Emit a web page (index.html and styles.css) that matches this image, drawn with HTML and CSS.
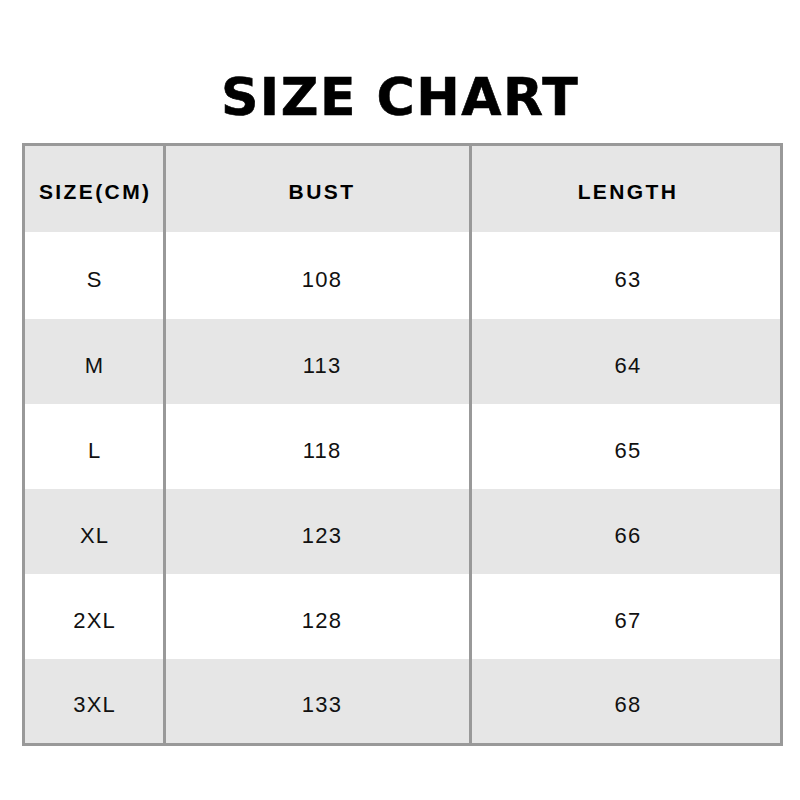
FILE: index.html
```html
<!DOCTYPE html>
<html>
<head>
<meta charset="utf-8">
<link rel="stylesheet" href="styles.css">
</head>
<body>
<div class="page">
  <h1 class="title">SIZE CHART</h1>
  <div class="chart">
    <div class="cell head c1">SIZE(CM)</div>
    <div class="cell head c2">BUST</div>
    <div class="cell head c3">LENGTH</div>

    <div class="cell c1">S</div>
    <div class="cell c2">108</div>
    <div class="cell c3">63</div>

    <div class="cell alt c1">M</div>
    <div class="cell alt c2">113</div>
    <div class="cell alt c3">64</div>

    <div class="cell c1">L</div>
    <div class="cell c2">118</div>
    <div class="cell c3">65</div>

    <div class="cell alt c1">XL</div>
    <div class="cell alt c2">123</div>
    <div class="cell alt c3">66</div>

    <div class="cell c1">2XL</div>
    <div class="cell c2">128</div>
    <div class="cell c3">67</div>

    <div class="cell alt c1">3XL</div>
    <div class="cell alt c2">133</div>
    <div class="cell alt c3">68</div>
  </div>
</div>
</body>
</html>
```

FILE: styles.css
```css
html, body {
  margin: 0;
  padding: 0;
  background: #ffffff;
}

.page {
  width: 800px;
  height: 800px;
  padding-top: 71px;
  box-sizing: border-box;
}

.title {
  margin: 0;
  text-align: center;
  font-family: "DejaVu Sans", sans-serif;
  font-weight: 700;
  font-size: 52px;
  line-height: 52px;
  letter-spacing: 1.5px;
  color: #000000;
  height: 52px;
  -webkit-text-stroke: 0.6px #000000;
}

.chart {
  margin-top: 20px;
  margin-left: 22px;
  width: 761px;
  box-sizing: border-box;
  border: 3px solid #999999;
  display: grid;
  grid-template-columns: 141px 306px 308px;
  grid-template-rows: 86px 87px 85px 85px 85px 85px 84px;
  background: #ffffff;
}

.cell {
  display: flex;
  align-items: center;
  justify-content: center;
  box-sizing: border-box;
  padding-top: 8px;
  padding-left: 1.2px;
  font-family: "Liberation Sans", Arial, sans-serif;
  font-size: 22px;
  letter-spacing: 1.2px;
  color: #111111;
  background: #ffffff;
}

.cell.c1,
.cell.c2 {
  border-right: 3px solid #999999;
}

.cell.c2 {
  padding-left: 9px;
}

.cell.c3 {
  padding-left: 4px;
}

.cell.head {
  background: #e6e6e6;
  font-weight: 700;
  font-size: 21px;
  letter-spacing: 2.4px;
  padding-top: 6px;
  color: #000000;
}

.cell.head.c1 {
  padding-left: 2.4px;
}

.cell.alt {
  background: #e6e6e6;
}
```
